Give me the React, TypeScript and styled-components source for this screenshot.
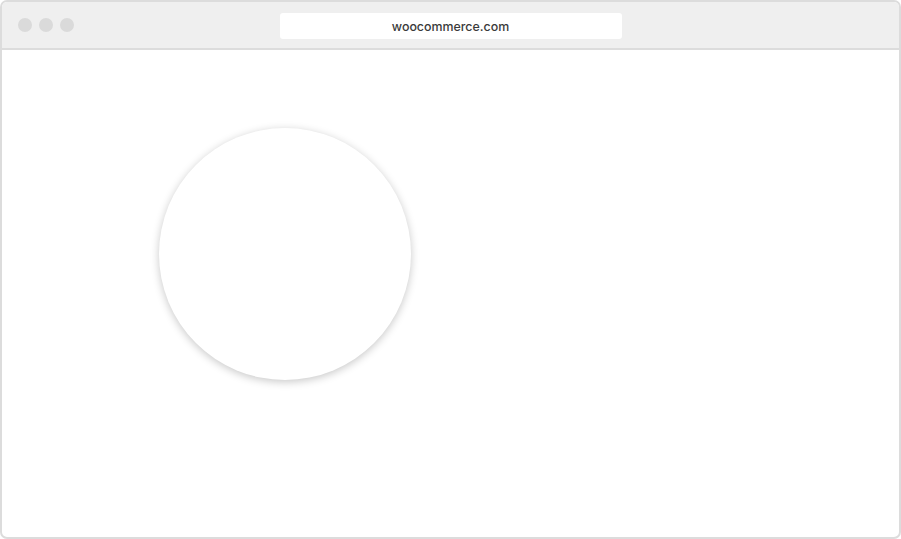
import React from "react";
import styled, { createGlobalStyle } from "styled-components";

const Global = createGlobalStyle`
  html, body { margin: 0; padding: 0; background: #fff; }
  body { font-family: Inter, "Open Sans", "Liberation Sans", sans-serif; }
`;

const Frame = styled.div`
  box-sizing: border-box;
  width: 901px;
  height: 539px;
  border: 2px solid #dcdcdc;
  border-radius: 7px;
  overflow: hidden;
  display: flex;
  flex-direction: column;
  background: #fff;
`;

const TopBar = styled.div`
  box-sizing: border-box;
  height: 48px;
  flex: none;
  background: #efefef;
  border-bottom: 2px solid #dcdcdc;
  display: grid;
  grid-template-columns: 1fr 342px 1fr;
  align-items: center;
  padding: 0 0 0 16px;
`;

const Dots = styled.div`
  display: flex;
  gap: 7px;
`;

const Dot = styled.span`
  width: 14px;
  height: 14px;
  border-radius: 50%;
  background: #dadada;
`;

const Url = styled.div`
  margin: 2px 0 0 -8px;
  height: 26px;
  width: 342px;
  border-radius: 3px;
  background: #fff;
  display: flex;
  align-items: center;
  justify-content: center;
  font-size: 12.4px;
  font-weight: 500;
  color: #3a3a3a;
`;

const Body = styled.div`
  flex: 1;
  padding: 78px 0 0 157px;
`;

const Circle = styled.div`
  width: 252px;
  height: 252px;
  border-radius: 50%;
  background: #fff;
  box-shadow: 0 2px 8px rgba(0, 0, 0, 0.22);
`;

export default function App() {
  return (
    <>
      <Global />
      <Frame>
        <TopBar>
          <Dots>
            <Dot />
            <Dot />
            <Dot />
          </Dots>
          <Url>woocommerce.com</Url>
          <div />
        </TopBar>
        <Body>
          <Circle />
        </Body>
      </Frame>
    </>
  );
}
